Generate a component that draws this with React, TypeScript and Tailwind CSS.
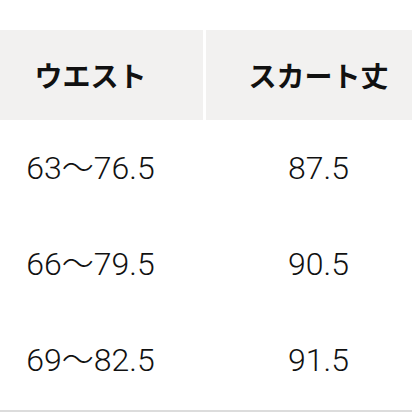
export default function App() {
  const rows = [
    ["63〜76.5", "87.5"],
    ["66〜79.5", "90.5"],
    ["69〜82.5", "91.5"],
  ];
  return (
    <div className="w-[412px] h-[412px] overflow-hidden bg-white">
      <div className="ml-[-22px] w-[452px] pt-[30px]">
        <div className="grid grid-cols-[225px_225px] gap-x-[3px]">
          <div className="h-[90px] bg-[#f2f1f0] flex items-center justify-center text-[28px] font-bold text-[#111] [font-family:'Noto_Sans_CJK_JP',sans-serif]">
            ウエスト
          </div>
          <div className="h-[90px] bg-[#f2f1f0] flex items-center justify-center text-[28px] font-bold text-[#111] [font-family:'Noto_Sans_CJK_JP',sans-serif]">
            スカート丈
          </div>
        </div>
        {rows.map(([a, b]) => (
          <div key={a} className="grid grid-cols-[225px_225px] gap-x-[3px] h-[96px]">
            <div className="flex items-center justify-center text-[32px] font-light text-[#111] [font-family:'Roboto','Noto_Sans_CJK_JP',sans-serif]">
              {a}
            </div>
            <div className="flex items-center justify-center text-[32px] font-light text-[#111] [font-family:'Roboto','Noto_Sans_CJK_JP',sans-serif]">
              {b}
            </div>
          </div>
        ))}
        <div className="mt-[2px] h-[2px] bg-[#dcdcdc]" />
      </div>
    </div>
  );
}
